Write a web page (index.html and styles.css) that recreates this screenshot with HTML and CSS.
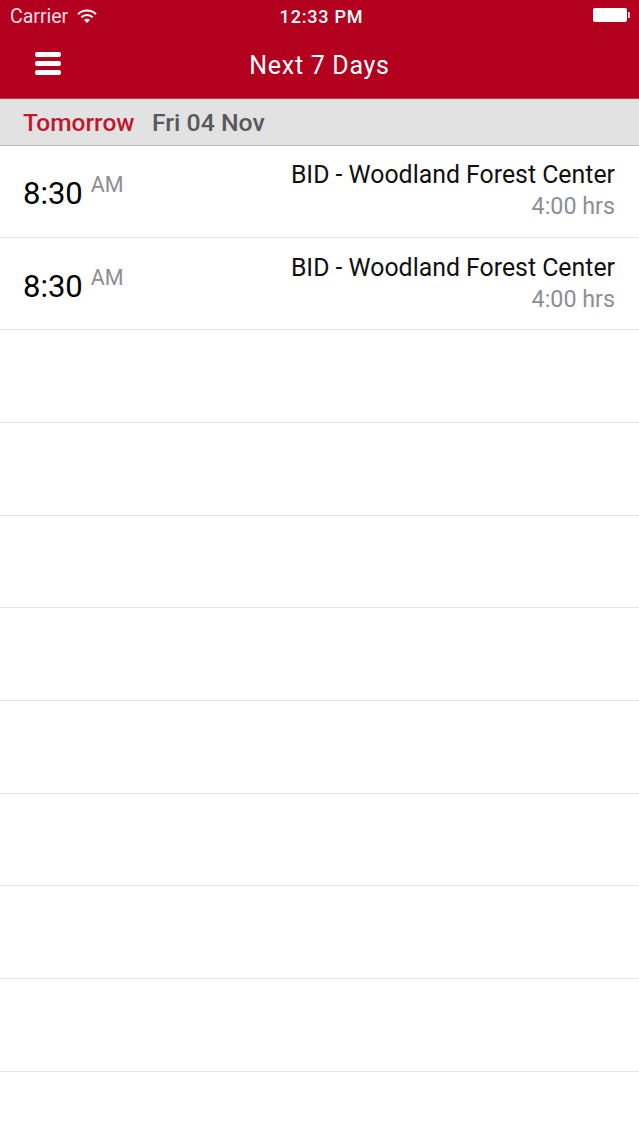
FILE: index.html
```html
<!DOCTYPE html>
<html lang="en">
<head>
    <meta charset="UTF-8">
    <meta name="viewport" content="width=device-width, initial-scale=1.0">
    <title>Next 7 Days</title>
    <link rel="stylesheet" href="styles.css">
</head>
<body>
    <header class="top">
        <div class="status">
            <div class="status-left">
                <span>Carrier</span>
                <svg class="wifi" width="20" height="15" viewBox="0 0 20 15">
                    <path d="M1 5.2C6 .4 14 .4 19 5.2" fill="none" stroke="#fff" stroke-width="2"/>
                    <path d="M4.3 8.2c3.300-3 8.100-3 11.400 0" fill="none" stroke="#fff" stroke-width="2"/>
                    <path d="M7 10.800c1.800-1.400 4.200-1.400 6 0L10 14z" fill="#fff"/>
                </svg>
            </div>
            <span class="clock">12:33 PM</span>
            <div class="battery"><div class="battery-cap"></div></div>
        </div>
        <div class="navbar">
            <div class="burger"><i></i><i></i><i></i></div>
            <h1>Next 7 Days</h1>
        </div>
    </header>

    <section class="day-head">
        <span class="day-rel">Tomorrow</span>
        <span class="day-date">Fri 04 Nov</span>
    </section>

    <main class="list">
        <div class="row">
            <div class="time"><span class="hour">8:30</span><span class="ampm">AM</span></div>
            <div class="info">
                <div class="place">BID - Woodland Forest Center</div>
                <div class="hours">4:00 hrs</div>
            </div>
        </div>
        <div class="row">
            <div class="time"><span class="hour">8:30</span><span class="ampm">AM</span></div>
            <div class="info">
                <div class="place">BID - Woodland Forest Center</div>
                <div class="hours">4:00 hrs</div>
            </div>
        </div>
        <div class="row"></div>
        <div class="row"></div>
        <div class="row"></div>
        <div class="row"></div>
        <div class="row"></div>
        <div class="row"></div>
        <div class="row"></div>
        <div class="row"></div>
    </main>
</body>
</html>
```

FILE: styles.css
```css
html, body {
    margin: 0;
    height: 100%;
    overflow: hidden;
}
body {
    font-family: Roboto, "Liberation Sans", sans-serif;
    background-color: #fff;
}
.top {
    background-color: #b3001e;
    color: #fff;
    height: 99px;
    box-sizing: border-box;
    border-bottom: 1px solid #c63a4e;
}
.status {
    height: 32px;
    display: grid;
    grid-template-columns: 1fr auto 1fr;
    align-items: center;
    padding: 0 9px 0 10px;
    font-size: 18px;
}
.status-left {
    display: flex;
    align-items: center;
    gap: 9px;
    font-size: 19.500px;
    color: #f6dfe3;
}
.clock {
    font-weight: 500;
    letter-spacing: 0.8px;
    margin-left: 3px;
}
.battery {
    justify-self: end;
    position: relative;
    width: 34px;
    height: 14px;
    background-color: #fff;
    border-radius: 2px;
    margin-right: 3px;
    margin-top: -2px;
}
.battery-cap {
    position: absolute;
    left: 35px;
    top: 4px;
    width: 2px;
    height: 6px;
    background-color: #f3c9d0;
}
.navbar {
    height: 66px;
    display: flex;
    align-items: center;
    justify-content: center;
    position: relative;
}
.navbar h1 {
    margin: 0;
    padding-top: 1px;
    font-size: 25px;
    font-weight: 400;
    letter-spacing: 0.7px;
}
.burger {
    position: absolute;
    left: 35px;
    top: 20px;
    width: 26px;
    display: flex;
    flex-direction: column;
    gap: 4px;
}
.burger i {
    display: block;
    height: 5px;
    background-color: #fff;
    border-radius: 2px;
}
.day-head {
    height: 47px;
    box-sizing: border-box;
    background-color: #e2e2e3;
    border-bottom: 1px solid #bdbdbd;
    display: flex;
    align-items: center;
    padding: 1px 0 0 23px;
    gap: 17.500px;
    font-size: 24.500px;
    font-weight: 500;
}
.day-rel {
    color: #c0172f;
}
.day-date {
    font-size: 24.800px;
    color: #58595b;
}
.list {
    margin-top: -1px;
}
.row {
    height: 92.67px;
    box-sizing: border-box;
    border-bottom: 1px solid #e3e3e3;
    display: flex;
    justify-content: space-between;
    padding: 14px 24px 0 23px;
}
.time {
    display: flex;
    align-items: flex-start;
    gap: 8px;
}
.hour {
    font-size: 31px;
    color: #000;
    margin-top: 16px;
}
.ampm {
    font-size: 21.500px;
    color: #8e8e93;
    margin-top: 13px;
}
.info {
    text-align: right;
}
.place {
    font-size: 24.850px;
    line-height: 32px;
    color: #111;
}
.hours {
    font-size: 23.300px;
    line-height: 30px;
    color: #8e8e93;
}
```
